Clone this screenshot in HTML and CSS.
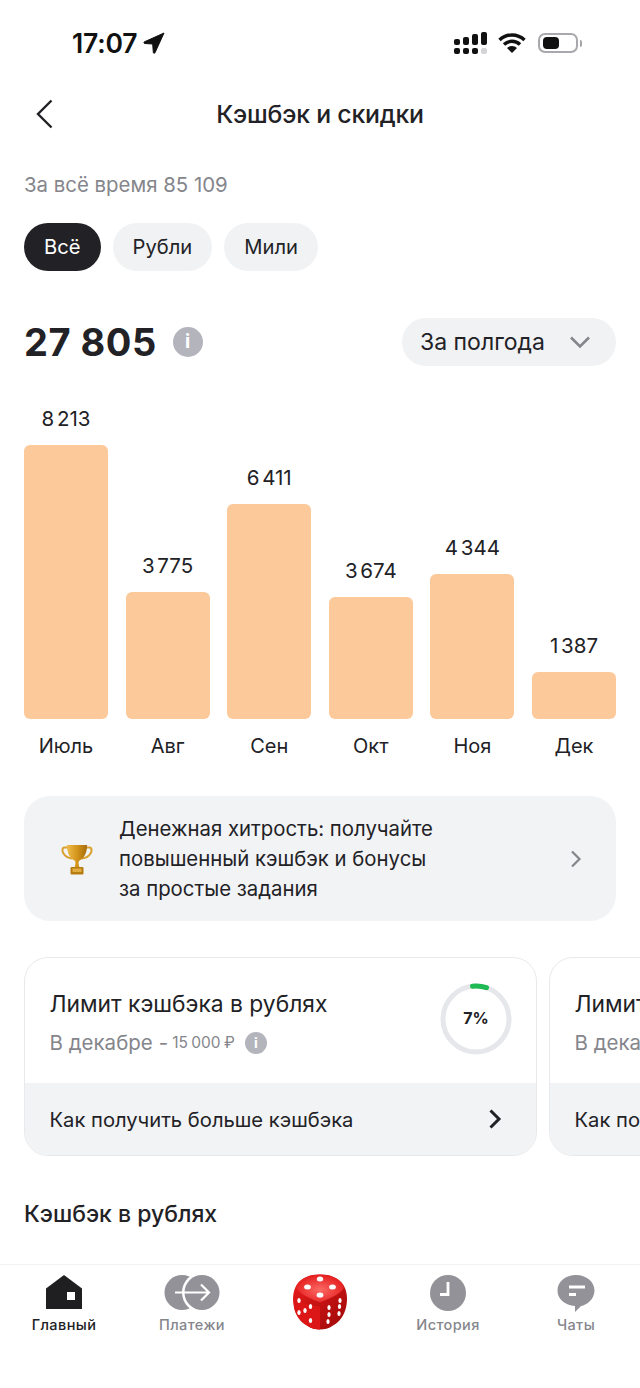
FILE: index.html
```html
<!DOCTYPE html>
<html lang="ru">
<head>
    <meta charset="UTF-8">
    <title>Кэшбэк и скидки</title>
    <link rel="stylesheet" href="styles.css">
</head>
<body>
<div class="page">
    <div class="status">
        <div class="status-left">
            <span class="time">17:07</span>
            <svg class="loc" width="22" height="22" viewBox="0 0 22 22"><path d="M21 1 1.500 9.800c-1 .5-.7 1.700.3 1.700l7.900.5.6 8.400c.1 1 1.300 1.200 1.700.3z" fill="#111" stroke="#111" stroke-linejoin="round"/></svg>
        </div>
        <div class="status-right">
            <svg width="33" height="22" viewBox="0 0 33 22"><g fill="#111"><rect x="0" y="7" width="6" height="6" rx="2"/><rect x="9" y="5" width="6" height="8" rx="2"/><rect x="18" y="2" width="6" height="11" rx="2"/><rect x="27" y="0" width="6" height="13" rx="2"/><rect x="0" y="16" width="6" height="6" rx="2"/><rect x="9" y="16" width="6" height="6" rx="2"/><rect x="18" y="16" width="6" height="6" rx="2"/></g><rect x="27" y="16" width="6" height="6" rx="2" fill="#d4d4d6"/></svg>
            <svg class="wifi" width="28" height="20" viewBox="0 0 28 20"><path d="M1.500 7a18 18 0 0 1 25 0M6 11.500a11.500 11.500 0 0 1 16 0" fill="none" stroke="#111" stroke-width="3.400"/><path d="M14 20 9 15a7 7 0 0 1 10 0z" fill="#111"/></svg>
            <div class="battery"><div class="battery-fill"></div></div>
            <div class="battery-tip"></div>
        </div>
    </div>

    <div class="header">
        <svg class="back" width="22" height="32" viewBox="0 0 22 32"><path d="M17.500 2.500 4 16l13.500 13.500" fill="none" stroke="#222226" stroke-width="2.400"/></svg>
        <div class="header-title">Кэшбэк и скидки</div>
    </div>

    <div class="content">
        <div class="total-all">За всё время 85 109</div>
        <div class="tabs">
            <div class="tab tab-active">Всё</div>
            <div class="tab">Рубли</div>
            <div class="tab">Мили</div>
        </div>

        <div class="summary">
            <div class="summary-left">
                <span class="amount">27 805</span>
                <span class="info info-big">i</span>
            </div>
            <div class="period">
                <span>За полгода</span>
                <svg width="24" height="16" viewBox="0 0 24 16"><path d="M3 3.500 12 12.500l9-9" fill="none" stroke="#85858c" stroke-width="2.600"/></svg>
            </div>
        </div>

        <div class="chart">
            <div class="col"><div class="val">8 213</div><div class="bar" style="height:274px"></div><div class="month">Июль</div></div>
            <div class="col"><div class="val">3 775</div><div class="bar" style="height:127px"></div><div class="month">Авг</div></div>
            <div class="col"><div class="val">6 411</div><div class="bar" style="height:215px"></div><div class="month">Сен</div></div>
            <div class="col"><div class="val">3 674</div><div class="bar" style="height:122px"></div><div class="month">Окт</div></div>
            <div class="col"><div class="val">4 344</div><div class="bar" style="height:145px"></div><div class="month">Ноя</div></div>
            <div class="col"><div class="val">1 387</div><div class="bar" style="height:47px"></div><div class="month">Дек</div></div>
        </div>

        <div class="promo">
            <svg class="trophy" width="32" height="32" viewBox="0 0 32 32">
                <defs>
                    <linearGradient id="gold" x1="0" y1="0" x2="1" y2="0"><stop offset="0" stop-color="#eebb4a"/><stop offset=".5" stop-color="#d4951c"/><stop offset="1" stop-color="#a66c0a"/></linearGradient>
                </defs>
                <path d="M7 4.500H3.500C1 4.500 1 8 2.500 10.500c1.500 2.500 5 4.500 8.500 5M25 4.500h3.500c2.500 0 2.500 3.500 1 6-1.500 2.500-5 4.500-8.500 5" fill="none" stroke="#d9a02e" stroke-width="2"/>
                <path d="M6 2h20c0 8-2.500 13-7.500 15.500-1.500.8-1 4 0 7h-5c1-3 1.500-6.200 0-7C8.500 15 6 10 6 2z" fill="url(#gold)"/>
                <rect x="9.500" y="24" width="13" height="7.500" rx="1" fill="#b67c12"/>
                <rect x="11.500" y="25.500" width="9" height="3.500" fill="#e0ac42"/>
            </svg>
            <div class="promo-text">Денежная хитрость: получайте<br>повышенный кэшбэк и бонусы<br>за простые задания</div>
            <svg class="promo-arrow" width="14" height="20" viewBox="0 0 14 20"><path d="M3 2.500 10.500 10 3 17.500" fill="none" stroke="#85858c" stroke-width="2.200"/></svg>
        </div>
    </div>

    <div class="cards">
        <div class="card">
            <div class="card-top">
                <div>
                    <div class="card-title">Лимит кэшбэка в рублях</div>
                    <div class="card-sub">В декабре<span class="dash">-</span><span class="limit">15 000 ₽</span><span class="info info-small">i</span></div>
                </div>
                <div class="ring">
                    <svg width="74" height="74" viewBox="0 0 74 74">
                        <circle cx="37" cy="37" r="33" fill="none" stroke="#e6e7eb" stroke-width="5"/>
                        <path d="M33.500 4.200A33 33 0 0 1 47.500 5.700" fill="none" stroke="#1fba54" stroke-width="5" stroke-linecap="round"/>
                    </svg>
                    <span class="ring-label">7%</span>
                </div>
            </div>
            <div class="card-bottom">
                <span>Как получить больше кэшбэка</span>
                <svg width="16" height="22" viewBox="0 0 16 22"><path d="M3.500 2.500 12 11l-8.500 8.500" fill="none" stroke="#222226" stroke-width="3"/></svg>
            </div>
        </div>
        <div class="card">
            <div class="card-top">
                <div>
                    <div class="card-title">Лимит кэшбэка в милях</div>
                    <div class="card-sub">В декабре<span class="dash">-</span><span class="limit">15 000</span></div>
                </div>
            </div>
            <div class="card-bottom">
                <span>Как получить больше миль</span>
            </div>
        </div>
    </div>

    <div class="section-title">Кэшбэк в рублях</div>

    <div class="nav">
        <div class="nav-item nav-active">
            <svg width="36" height="35" viewBox="0 0 36 35"><path d="M18 0 36 13.500V34H0V13.500z" fill="#1f1f22"/><rect x="21" y="17" width="8" height="8" fill="#fff"/></svg>
            <span>Главный</span>
        </div>
        <div class="nav-item">
            <svg width="56" height="35" viewBox="0 0 56 35">
                <circle cx="18" cy="17.500" r="17.500" fill="#929298"/>
                <circle cx="38" cy="17.500" r="20" fill="#fff"/>
                <circle cx="38" cy="17.500" r="17.500" fill="#929298"/>
                <path d="M11 17.500h33M37 9.500l8 8-8 8" fill="none" stroke="#fff" stroke-width="2.200"/>
            </svg>
            <span>Платежи</span>
        </div>
        <div class="nav-item">
            <svg class="dice" width="56" height="57" viewBox="0 0 56 56">
                <defs>
                    <radialGradient id="top" cx="50%" cy="55%" r="60%"><stop offset="0" stop-color="#fb6a66"/><stop offset="1" stop-color="#e21616"/></radialGradient>
                    <linearGradient id="side" x1="0" y1="0" x2="1" y2="1"><stop offset="0" stop-color="#ee1d1d"/><stop offset="1" stop-color="#9c0808"/></linearGradient>
                </defs>
                <path d="M28 1c10 0 18 3 23 10 4 6 5 14 3 23-2 8-6 14-13 18-4 3-9 4-13 4s-9-1-13-4C8 48 4 42 2 34 0 25 1 17 5 11 10 4 18 1 28 1z" fill="url(#side)"/>
                <path d="M2 22C8 30 18 32 28 33v23c-4 0-9-1-13-4C8 48 4 42 2 34z" fill="#dc1616"/>
                <path d="M5 11C10 4 18 1 28 1s18 3 23 10c1 2 1 4 0 5-5 6-14 9-23 13C19 25 10 22 5 16c-1-1-1-3 0-5z" fill="url(#top)"/>
                <g fill="#fff">
                    <ellipse cx="28" cy="5.500" rx="3.200" ry="2.500"/><ellipse cx="15.500" cy="13.500" rx="3.400" ry="2.500"/><ellipse cx="40.500" cy="13.500" rx="3.400" ry="2.500"/><ellipse cx="28" cy="21.500" rx="3.400" ry="2.600"/>
                    <ellipse cx="7" cy="27" rx="1.700" ry="2.500"/><ellipse cx="13" cy="37" rx="1.700" ry="2.500"/><ellipse cx="18.500" cy="33" rx="1.700" ry="2.500"/><ellipse cx="7" cy="39" rx="1.700" ry="2.500"/><ellipse cx="18.500" cy="47" rx="1.700" ry="2.500"/>
                    <ellipse cx="37" cy="34" rx="1.600" ry="2.500"/><ellipse cx="37" cy="41" rx="1.600" ry="2.500"/><ellipse cx="36" cy="48" rx="1.600" ry="2.500"/><ellipse cx="48" cy="27" rx="1.600" ry="2.500"/><ellipse cx="47.500" cy="33" rx="1.600" ry="2.500"/><ellipse cx="47" cy="40" rx="1.600" ry="2.500"/>
                </g>
            </svg>
        </div>
        <div class="nav-item">
            <svg width="36" height="36" viewBox="0 0 36 36"><circle cx="18" cy="18" r="18" fill="#929298"/><path d="M18 7v12.500H10" fill="none" stroke="#fff" stroke-width="2.800"/></svg>
            <span>История</span>
        </div>
        <div class="nav-item">
            <svg width="38" height="37" viewBox="0 0 38 37"><path d="M19 0c10.500 0 18.500 7 18.500 15.500S30 30 24 31l-6 6v-6C8 30 .5 24.500 .5 15.500S8.500 0 19 0z" fill="#929298"/><path d="M12 12h16M12 19.500h7" stroke="#fff" stroke-width="2.800"/></svg>
            <span>Чаты</span>
        </div>
    </div>
</div>
</body>
</html>
```

FILE: styles.css
```css
* {
    margin: 0;
    padding: 0;
    box-sizing: border-box;
}

body {
    background: #fff;
    color: #222226;
    font-family: Inter, "Noto Sans", sans-serif;
}

.page {
    width: 640px;
    height: 1388px;
    overflow: hidden;
    display: flex;
    flex-direction: column;
}

.status {
    height: 86px;
    padding: 27px 58px 0 72px;
    display: flex;
    justify-content: space-between;
    align-items: flex-start;
}

.status-left {
    display: flex;
    align-items: center;
    gap: 6px;
}

.time {
    font-size: 26.500px;
    line-height: 32px;
    font-weight: 600;
    letter-spacing: -0.2px;
    color: #111;
}

.status-right {
    display: flex;
    align-items: center;
    height: 32px;
}

.wifi {
    margin-left: 11px;
}

.battery {
    width: 40px;
    height: 20px;
    margin-left: 12px;
    padding: 2px 3px;
    border: 2px solid #a9a9ad;
    border-radius: 7px;
}

.battery-fill {
    width: 16px;
    height: 100%;
    background: #111;
    border-radius: 4px;
}

.battery-tip {
    width: 2px;
    height: 7px;
    margin-left: 2px;
    background: #a5a5a8;
    border-radius: 0 2px 2px 0;
}

.header {
    height: 56px;
    padding-left: 34px;
    display: flex;
    align-items: center;
    position: relative;
}

.header-title {
    position: absolute;
    left: 0;
    right: 0;
    text-align: center;
    font-size: 24.800px;
    font-weight: 500;
    letter-spacing: -0.2px;
    pointer-events: none;
}

.content {
    padding: 0 24px;
}

.total-all {
    margin-top: 29px;
    font-size: 20.400px;
    line-height: 28px;
    color: #85858c;
}

.tabs {
    margin-top: 24px;
    display: flex;
    gap: 12px;
}

.tab {
    height: 48px;
    padding: 0 20px;
    border-radius: 24px;
    background: #f1f2f4;
    font-size: 20.200px;
    line-height: 48px;
}

.tab-active {
    background: #222226;
    color: #fff;
}

.summary {
    margin-top: 47px;
    display: flex;
    justify-content: space-between;
    align-items: center;
}

.summary-left {
    display: flex;
    align-items: center;
    gap: 16px;
}

.amount {
    font-size: 38px;
    font-weight: 700;
    letter-spacing: 0.5px;
}

.info {
    border-radius: 50%;
    background: #b3b4bc;
    color: #fff;
    font-weight: 700;
    text-align: center;
    flex: none;
}

.info-big {
    width: 30px;
    height: 30px;
    line-height: 30px;
    font-size: 19px;
}

.info-small {
    display: inline-block;
    width: 22px;
    height: 22px;
    margin-left: 10px;
    line-height: 22px;
    font-size: 14px;
}

.period {
    width: 214px;
    height: 48px;
    padding: 0 24px 0 18px;
    border-radius: 24px;
    background: #f1f2f4;
    display: flex;
    justify-content: space-between;
    align-items: center;
    font-size: 23px;
}

.chart {
    margin-top: 47px;
    height: 346px;
    display: flex;
    gap: 17.600px;
    align-items: flex-end;
}

.col {
    flex: 1;
    display: flex;
    flex-direction: column;
    align-items: center;
}

.val {
    margin-bottom: 13px;
    font-size: 20.500px;
    line-height: 26px;
    word-spacing: -3px;
}

.bar {
    width: 100%;
    background: #fcc99b;
    border-radius: 6px;
}

.month {
    margin-top: 14px;
    font-size: 20px;
    line-height: 26px;
}

.promo {
    margin-top: 37px;
    height: 125px;
    padding: 0 33px 0 37px;
    border-radius: 26px;
    background: #f2f3f5;
    display: flex;
    align-items: center;
}

.trophy {
    flex: none;
}

.promo-text {
    flex: 1;
    margin-left: 26px;
    font-size: 20.350px;
    line-height: 30px;
}

.cards {
    margin-top: 36px;
    padding-left: 24px;
    display: flex;
    gap: 12px;
    overflow: hidden;
}

.card {
    flex: none;
    width: 513px;
    height: 199px;
    border: 1.500px solid #e8e9ec;
    border-radius: 24px;
    overflow: hidden;
    display: flex;
    flex-direction: column;
}

.card-top {
    flex: 1;
    padding: 20px 23px 0 24.500px;
    display: flex;
    justify-content: space-between;
    align-items: flex-start;
}

.card-title {
    margin-top: 11px;
    font-size: 22.800px;
    line-height: 30px;
    white-space: nowrap;
}

.card-sub {
    margin-top: 9px;
    display: flex;
    align-items: center;
    font-size: 20.500px;
    line-height: 30px;
    color: #85858c;
    white-space: nowrap;
}

.dash {
    margin: 0 4px 0 6px;
}

.limit {
    font-size: 15.500px;
    word-spacing: -1px;
}

.ring {
    width: 74px;
    height: 74px;
    margin-top: 4px;
    position: relative;
}

.ring-label {
    position: absolute;
    left: 0;
    right: 0;
    top: 25px;
    text-align: center;
    font-size: 16px;
    line-height: 22px;
    font-weight: 700;
}

.card-bottom {
    height: 72px;
    padding: 0 33px 0 24.500px;
    background: #f2f3f5;
    display: flex;
    justify-content: space-between;
    align-items: center;
    font-size: 20.200px;
    white-space: nowrap;
}

.section-title {
    margin-top: 43px;
    padding-left: 24px;
    font-size: 23px;
    line-height: 30px;
    font-weight: 500;
}

.nav {
    margin-top: 35px;
    height: 124px;
    border-top: 1px solid #f2f2f4;
    display: grid;
    grid-template-columns: repeat(5, 128px);
}

.nav-item {
    height: 70px;
    padding-top: 10px;
    display: flex;
    flex-direction: column;
    align-items: center;
    justify-content: space-between;
    font-size: 14.500px;
    line-height: 20px;
    font-weight: 500;
    letter-spacing: 0.4px;
    color: #85858c;
}

.nav-active {
    color: #222226;
}

.dice {
    margin-top: -2px;
    flex: none;
}
```
